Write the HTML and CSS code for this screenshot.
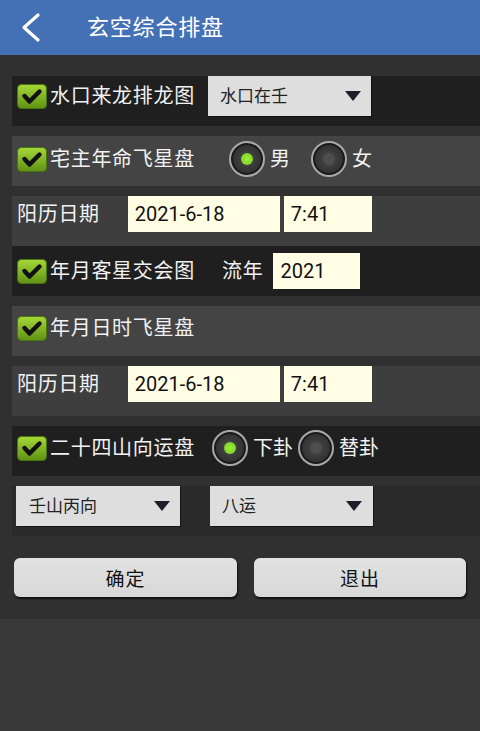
FILE: index.html
```html
<!DOCTYPE html>
<html lang="zh">
<head>
<meta charset="utf-8">
<title>玄空综合排盘</title>
<link rel="stylesheet" href="styles.css">
</head>
<body>
<header class="topbar">
  <svg class="back" width="24" height="32" viewBox="0 0 24 32"><polyline points="18,3 4,15.5 18,28" fill="none" stroke="#fff" stroke-width="3.2" stroke-linecap="round" stroke-linejoin="round"/></svg>
  <h1 class="title">玄空综合排盘</h1>
</header>

<main class="content">
  <div class="row dark r-top10">
    <span class="check"><svg width="30" height="25" viewBox="0 0 30 25"><defs><linearGradient id="g1" x1="0" y1="0" x2="0" y2="1"><stop offset="0" stop-color="#a6d83a"/><stop offset="1" stop-color="#5f9212"/></linearGradient></defs><rect x="0.5" y="0.5" width="29" height="24" rx="4" fill="url(#g1)" stroke="#4a7410"/><polyline points="7.5,12 12.5,17.5 22.5,7.5" fill="none" stroke="#111" stroke-width="4.4" stroke-linecap="round" stroke-linejoin="round"/></svg></span>
    <span class="label">水口来龙排龙图</span>
    <div class="select sel-water"><span>水口在壬</span><i class="tri"></i></div>
  </div>

  <div class="row grey gap pb4">
    <span class="check"><svg width="30" height="25" viewBox="0 0 30 25"><defs><linearGradient id="g2" x1="0" y1="0" x2="0" y2="1"><stop offset="0" stop-color="#a6d83a"/><stop offset="1" stop-color="#5f9212"/></linearGradient></defs><rect x="0.5" y="0.5" width="29" height="24" rx="4" fill="url(#g2)" stroke="#4a7410"/><polyline points="7.5,12 12.5,17.5 22.5,7.5" fill="none" stroke="#111" stroke-width="4.4" stroke-linecap="round" stroke-linejoin="round"/></svg></span>
    <span class="label">宅主年命飞星盘</span>
    <span class="radio on r-male"></span><span class="rlabel">男</span>
    <span class="radio r-female"></span><span class="rlabel">女</span>
  </div>

  <div class="row mid gap pb14">
    <span class="plain">阳历日期</span>
    <span class="input in-date">2021-6-18</span>
    <span class="input in-time">7:41</span>
  </div>

  <div class="row dark">
    <span class="check"><svg width="30" height="25" viewBox="0 0 30 25"><defs><linearGradient id="g3" x1="0" y1="0" x2="0" y2="1"><stop offset="0" stop-color="#a6d83a"/><stop offset="1" stop-color="#5f9212"/></linearGradient></defs><rect x="0.5" y="0.5" width="29" height="24" rx="4" fill="url(#g3)" stroke="#4a7410"/><polyline points="7.5,12 12.5,17.5 22.5,7.5" fill="none" stroke="#111" stroke-width="4.4" stroke-linecap="round" stroke-linejoin="round"/></svg></span>
    <span class="label">年月客星交会图</span>
    <span class="plain liunian">流年</span>
    <span class="input in-year">2021</span>
  </div>

  <div class="row grey gap pb6">
    <span class="check"><svg width="30" height="25" viewBox="0 0 30 25"><defs><linearGradient id="g4" x1="0" y1="0" x2="0" y2="1"><stop offset="0" stop-color="#a6d83a"/><stop offset="1" stop-color="#5f9212"/></linearGradient></defs><rect x="0.5" y="0.5" width="29" height="24" rx="4" fill="url(#g4)" stroke="#4a7410"/><polyline points="7.5,12 12.5,17.5 22.5,7.5" fill="none" stroke="#111" stroke-width="4.4" stroke-linecap="round" stroke-linejoin="round"/></svg></span>
    <span class="label">年月日时飞星盘</span>
  </div>

  <div class="row mid gap pb14">
    <span class="plain">阳历日期</span>
    <span class="input in-date">2021-6-18</span>
    <span class="input in-time">7:41</span>
  </div>

  <div class="row dark gap pb6">
    <span class="check"><svg width="30" height="25" viewBox="0 0 30 25"><defs><linearGradient id="g5" x1="0" y1="0" x2="0" y2="1"><stop offset="0" stop-color="#a6d83a"/><stop offset="1" stop-color="#5f9212"/></linearGradient></defs><rect x="0.5" y="0.5" width="29" height="24" rx="4" fill="url(#g5)" stroke="#4a7410"/><polyline points="7.5,12 12.5,17.5 22.5,7.5" fill="none" stroke="#111" stroke-width="4.4" stroke-linecap="round" stroke-linejoin="round"/></svg></span>
    <span class="label">二十四山向运盘</span>
    <span class="radio on r-xia"></span><span class="rlabel">下卦</span>
    <span class="radio r-ti"></span><span class="rlabel">替卦</span>
  </div>

  <div class="row low gap pb10">
    <div class="select sel-shan"><span>壬山丙向</span><i class="tri"></i></div>
    <div class="select sel-yun"><span>八运</span><i class="tri"></i></div>
  </div>

  <div class="buttons">
    <button class="btn btn-ok">确定</button>
    <button class="btn btn-exit">退出</button>
  </div>
</main>
</body>
</html>
```

FILE: styles.css
```css
* { box-sizing: border-box; }
html, body { margin: 0; padding: 0; }
body {
  width: 480px;
  height: 731px;
  background: #383838;
  font-family: Roboto, "Noto Sans CJK SC", sans-serif;
  color: #f2f2f2;
  overflow: hidden;
}
.topbar {
  height: 55px;
  background: #4471b6;
  display: flex;
  align-items: center;
}
.back { margin-left: 20px; }
.title {
  margin: 0 0 0 43px;
  font-weight: normal;
  font-size: 22px;
  letter-spacing: 0.8px;
  color: #fff;
  line-height: 1;
}
.content {
  background: #303030;
  padding: 21px 0 22px 12px;
}
.row {
  height: 50px;
  display: flex;
  align-items: center;
  padding-left: 5px;
}
.gap { margin-top: 10px; }
.pb4 { padding-bottom: 4px; }
.pb6 { padding-bottom: 6px; }
.pb10 { padding-bottom: 10px; }
.pb14 { padding-bottom: 14px; }
.r-top10 { padding-bottom: 10px; }
.dark { background: #1f1f1f; }
.grey { background: #444444; }
.mid { background: #3e3e3e; }
.low { background: #2a2a2a; padding-left: 4px; }

.check { width: 30px; height: 25px; display: block; flex: none; }
.check svg { display: block; }
.label {
  margin-left: 3px;
  font-size: 20px;
  letter-spacing: 0.7px;
  line-height: 1;
  white-space: nowrap;
  width: 145px;
}
.plain {
  font-size: 20px;
  letter-spacing: 0.7px;
  line-height: 1;
  white-space: nowrap;
}

.select {
  height: 40px;
  background: #dedede;
  color: #222;
  display: flex;
  align-items: center;
  justify-content: space-between;
  font-size: 17px;
  box-shadow: 1px 1px 0 rgba(0,0,0,0.5);
}
.select span { line-height: 1; }
.tri {
  width: 0; height: 0;
  border-left: 8px solid transparent;
  border-right: 8px solid transparent;
  border-top: 10px solid #1e1e2a;
}
.sel-water { width: 163px; margin-left: 13px; padding: 0 10px 0 12px; }
.sel-shan { width: 164px; padding: 0 10px 0 13px; }
.sel-yun { width: 163px; margin-left: 30px; padding: 0 11px 0 12px; }

.radio {
  width: 36px; height: 36px;
  border-radius: 50%;
  flex: none;
  position: relative;
  border: 2px solid #a8a8a8;
  background: radial-gradient(circle at 50% 50%, #4a4a4a 0, #3a3a3a 40%, #262626 100%);
  box-shadow: inset 0 0 0 2px #1a1a1a;
}
.radio::after {
  content: "";
  position: absolute;
  left: 50%; top: 50%;
  width: 12px; height: 12px;
  margin: -6px 0 0 -6px;
  border-radius: 50%;
  background: #4e4e4e;
}
.radio.on::after { background: radial-gradient(circle, #9cf03a 0, #74c81e 100%); }
.rlabel { font-size: 20px; line-height: 1; margin-left: 5px; white-space: nowrap; }
.r-male { margin-left: 34px; }
.r-female { margin-left: 21px; }
.r-xia { margin-left: 17px; }
.r-ti { margin-left: 5px; }

.input {
  height: 36px;
  background: #fffde4;
  color: #111;
  font-size: 20px;
  display: flex;
  align-items: center;
  padding-left: 7px;
  line-height: 1;
}
.in-date { width: 152px; margin-left: 28px; }
.in-time { width: 88px; margin-left: 4px; }
.liunian { margin-left: 27px; }
.in-year { width: 87px; margin-left: 10px; }

.buttons {
  display: flex;
  margin-top: 22px;
  margin-left: -12px;
  padding-left: 14px;
}
.btn {
  height: 39px;
  border: none;
  border-radius: 6px;
  background: linear-gradient(#e2e2e2, #d8d8d8);
  color: #111;
  font-family: Roboto, "Noto Sans CJK SC", sans-serif;
  font-size: 19px;
  letter-spacing: 1px;
  box-shadow: 1px 2px 2px rgba(0,0,0,0.7);
  padding: 0;
}
.btn-ok { width: 223px; }
.btn-exit { width: 212px; margin-left: 17px; }
```
